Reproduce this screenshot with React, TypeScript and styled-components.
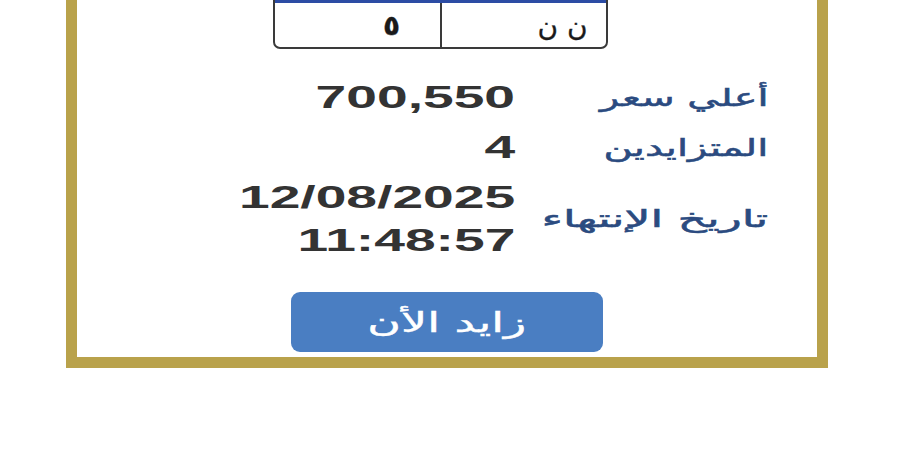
import React from "react";
import styled, { createGlobalStyle } from "styled-components";

const GlobalStyle = createGlobalStyle`
  html, body {
    margin: 0;
    padding: 0;
    background: #ffffff;
  }
  body {
    width: 900px;
    height: 450px;
    overflow: hidden;
    font-family: "Liberation Sans", "DejaVu Sans", Arial, sans-serif;
  }
`;

const Card = styled.div`
  box-sizing: border-box;
  width: 762px;
  margin: -80px 0 0 66px;
  border: 11px solid #b9a24b;
  background: #ffffff;
  padding: 14px 0 5px;
  display: flex;
  flex-direction: column;
  align-items: center;
`;

const Plate = styled.div`
  box-sizing: border-box;
  width: 335px;
  margin-left: -14px;
  border: 2px solid #3a3a3a;
  border-radius: 0 0 7px 7px;
  overflow: hidden;
`;

const PlateHeader = styled.div`
  height: 56px;
  background: #2c4ca4;
`;

const PlateCells = styled.div`
  display: grid;
  grid-template-columns: 1fr 1fr;
  direction: rtl;
  height: 44px;
`;

const PlateCell = styled.div<{ $divider?: boolean; $pad: number; $bold?: boolean }>`
  display: flex;
  align-items: center;
  padding-right: ${(p) => p.$pad}px;
  border-left: ${(p) => (p.$divider ? "2px solid #3a3a3a" : "none")};
  font-family: "DejaVu Sans", sans-serif;
  font-size: 28px;
  font-weight: ${(p) => (p.$bold ? "bold" : "normal")};
  -webkit-text-stroke: 0.3px #1a1a1a;
  color: #1a1a1a;
`;

const Details = styled.div`
  align-self: stretch;
  direction: rtl;
  display: grid;
  grid-template-columns: 238px auto;
  justify-content: start;
  column-gap: 15px;
  row-gap: 7px;
  padding-right: 49px;
  margin-top: 27px;
`;

const Label = styled.div`
  display: flex;
  align-items: center;
  font-family: "DejaVu Sans", sans-serif;
  font-size: 24px;
  color: #2b4b80;
  -webkit-text-stroke: 0.5px #2b4b80;
  white-space: nowrap;
`;

const Stretch = styled.span<{ $scale?: number }>`
  display: inline-block;
  transform: scaleX(${(p) => p.$scale ?? 1.78});
  transform-origin: right center;
`;

const Value = styled.div`
  direction: ltr;
  text-align: right;
  font-family: "Liberation Sans", Arial, sans-serif;
  font-weight: bold;
  font-size: 31px;
  line-height: 43px;
  color: #333333;
`;

const ValueLine = styled.div`
  display: flex;
  justify-content: flex-end;
`;

const BidButton = styled.button`
  box-sizing: border-box;
  width: 312px;
  height: 60px;
  margin-top: 30px;
  border: none;
  border-radius: 9px;
  background: #4a7ec2;
  color: #ffffff;
  font-family: "DejaVu Sans", sans-serif;
  font-size: 27px;
  -webkit-text-stroke: 0.4px #ffffff;
  display: flex;
  align-items: center;
  justify-content: center;
  cursor: pointer;
`;

const ButtonText = styled.span`
  display: inline-block;
  transform: scaleX(1.7);
`;

const rows: { label: string; values: string[]; scale: number }[] = [
  { label: "أعلي سعر", values: ["700,550"], scale: 1.66 },
  { label: "المتزايدين", values: ["4"], scale: 1.66 },
  { label: "تاريخ الإنتهاء", values: ["12/08/2025", "11:48:57"], scale: 1.9 },
];

const App = () => {
  return (
    <>
      <GlobalStyle />
      <Card>
        <Plate>
          <PlateHeader />
          <PlateCells>
            <PlateCell $divider $pad={18}>ن ن</PlateCell>
            <PlateCell $pad={40} $bold>٥</PlateCell>
          </PlateCells>
        </Plate>
        <Details>
          {rows.map((row) => (
            <React.Fragment key={row.label}>
              <Label>
                <Stretch $scale={row.scale}>{row.label}</Stretch>
              </Label>
              <Value>
                {row.values.map((v) => (
                  <ValueLine key={v}>
                    <Stretch>{v}</Stretch>
                  </ValueLine>
                ))}
              </Value>
            </React.Fragment>
          ))}
        </Details>
        <BidButton>
          <ButtonText>زايد الأن</ButtonText>
        </BidButton>
      </Card>
    </>
  );
};

export default App;
